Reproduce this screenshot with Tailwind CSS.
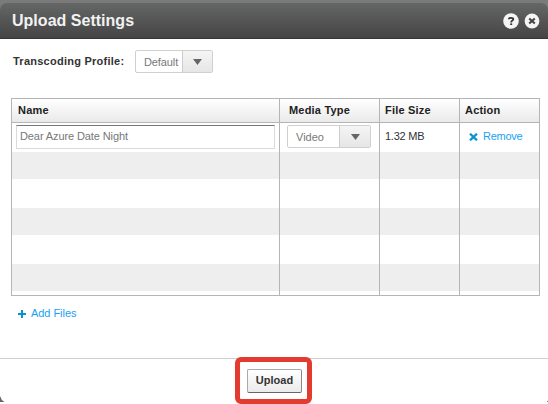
<!DOCTYPE html>
<html lang="en">
<head>
<meta charset="utf-8">
<title>Upload Settings</title>
<script src="https://cdn.jsdelivr.net/npm/@tailwindcss/browser@4"></script>
</head>
<body class="w-[548px] h-[404px] overflow-hidden bg-white font-['Liberation_Sans',Arial,sans-serif] text-[11px] leading-[14px] text-[#333]">
<div class="relative flex flex-col h-[404px]">
  <header class="h-[39px] bg-[#7a7a7a] pt-[3px] shrink-0">
    <div class="flex items-center h-9 pl-3 pr-2 rounded-t-[7px] border-b border-[#3a3434] bg-linear-to-b from-[#656666] to-[#444544]">
      <h1 class="text-[16px] leading-5 font-bold text-[#f2f2f2] tracking-[0.02px] whitespace-nowrap">Upload Settings</h1>
      <div class="ml-auto flex items-center gap-[5px]">
        <button aria-label="Help"><svg class="block" width="16" height="16" viewBox="0 0 16 16"><circle cx="8" cy="8" r="7.8" fill="#f5f5f5"/><path d="M5.7 6.2Q5.8 4.8 8 4.8Q10.3 4.8 10.3 6.3Q10.3 7.2 9.1 7.8Q8.2 8.3 8.2 9.4" fill="none" stroke="#333" stroke-width="1.8"/><path d="M7.2 10.4h2v1.6h-2z" fill="#333"/></svg></button>
        <button aria-label="Close"><svg class="block" width="16" height="16" viewBox="0 0 16 16"><circle cx="8" cy="8" r="7.4" fill="#f5f5f5"/><path d="M5.2 5.4l5.6 5.2M10.8 5.4l-5.6 5.2" stroke="#444" stroke-width="2"/></svg></button>
      </div>
    </div>
  </header>
  <main class="h-[319px] shrink-0">
    <div class="flex items-start pt-[11px] pl-[13px] h-[59px]">
      <label class="w-[122px] pt-1 font-bold tracking-[0.25px] whitespace-nowrap">Transcoding Profile:</label>
      <div class="flex w-[78px] h-[23px] border border-[#d0d0d0] rounded-[2px] text-[#777]">
        <span class="w-[47px] pl-2 pt-[4px] border-r border-[#ccc] tracking-[-0.1px]">Default</span>
        <span class="flex-1 flex items-center justify-center bg-linear-to-b from-[#f5f5f5] to-[#e6e6e6]"><svg width="9" height="6" viewBox="0 0 9 6"><path d="M0 0h9L4.5 6z" fill="#666"/></svg></span>
      </div>
    </div>
    <div class="ml-[11px] w-[529px] h-[198px] border border-[#b5b5b8] grid grid-cols-[268px_100px_80px_79px] grid-rows-[24px_29px_27px_29px_27px_29px_27px_4px]">
      <div class="col-span-4 grid grid-cols-subgrid border-b border-[#b5b5b8] bg-linear-to-b from-white to-[#eaeaea] font-bold text-[#222] tracking-[0.2px]">
        <div class="pl-[6px] pt-1 border-r border-[#b5b5b8]">Name</div>
        <div class="pl-[9px] pt-1 border-r border-[#b5b5b8]">Media Type</div>
        <div class="pl-[5px] pt-1 border-r border-[#b5b5b8]">File Size</div>
        <div class="pl-[5px] pt-1">Action</div>
      </div>
      <div class="col-span-4 grid grid-cols-subgrid">
        <div class="pl-1 pt-[2px] border-r border-[#b5b5b8]"><div class="w-[259px] h-6 border border-[#dadada] border-t-[#777] pl-[3px] pt-[3px] text-[#777] tracking-[-0.1px]">Dear Azure Date Night</div></div>
        <div class="pl-[7px] pt-[2px] border-r border-[#b5b5b8]">
          <div class="flex w-[84px] h-[23px] border border-[#d0d0d0] rounded-[2px] text-[#777]">
            <span class="w-[52px] pl-2 pt-1 border-r border-[#ccc]">Video</span>
            <span class="flex-1 flex items-center justify-center bg-linear-to-b from-[#f5f5f5] to-[#e6e6e6]"><svg width="9" height="6" viewBox="0 0 9 6"><path d="M0 0h9L4.5 6z" fill="#666"/></svg></span>
          </div>
        </div>
        <div class="pl-[5px] pt-[6px] border-r border-[#b5b5b8] tracking-[-0.25px]">1.32 MB</div>
        <a class="flex items-start pl-[9px] pt-[6px] text-[#1a9ff5] tracking-[-0.25px]"><svg class="mt-[4px] mr-[5px]" width="9" height="8" viewBox="0 0 9 8"><path d="M1 .7L8 7.3M8 .7L1 7.3" stroke="#0794cf" stroke-width="2.3"/></svg>Remove</a>
      </div>
      <div class="col-span-4 grid grid-cols-subgrid bg-[#eee]"><i class="border-r border-[#b5b5b8]"></i><i class="border-r border-[#b5b5b8]"></i><i class="border-r border-[#b5b5b8]"></i></div>
      <div class="col-span-4 grid grid-cols-subgrid"><i class="border-r border-[#b5b5b8]"></i><i class="border-r border-[#b5b5b8]"></i><i class="border-r border-[#b5b5b8]"></i></div>
      <div class="col-span-4 grid grid-cols-subgrid bg-[#eee]"><i class="border-r border-[#b5b5b8]"></i><i class="border-r border-[#b5b5b8]"></i><i class="border-r border-[#b5b5b8]"></i></div>
      <div class="col-span-4 grid grid-cols-subgrid"><i class="border-r border-[#b5b5b8]"></i><i class="border-r border-[#b5b5b8]"></i><i class="border-r border-[#b5b5b8]"></i></div>
      <div class="col-span-4 grid grid-cols-subgrid bg-[#eee]"><i class="border-r border-[#b5b5b8]"></i><i class="border-r border-[#b5b5b8]"></i><i class="border-r border-[#b5b5b8]"></i></div>
      <div class="col-span-4 grid grid-cols-subgrid"><i class="border-r border-[#b5b5b8]"></i><i class="border-r border-[#b5b5b8]"></i><i class="border-r border-[#b5b5b8]"></i></div>
    </div>
    <a class="flex items-start pl-[18px] pt-[10px] text-[#1a9ff5] tracking-[-0.05px]"><svg class="mt-1 mr-[5px]" width="8" height="8" viewBox="0 0 8 8"><path d="M3 0h2v3h3v2H5v3H3V5H0V3h3z" fill="#0794cf"/></svg>Add Files</a>
  </main>
  <footer class="h-[46px] border-t border-[#ccd1d1] pt-[10px] pl-[247px]">
    <button class="block w-[55px] h-6 rounded-[2px] border border-[#aaa] border-b-[#666] border-r-[#888] bg-linear-to-b from-white to-[#ebebeb] font-bold pb-[2px]">Upload</button>
  </footer>
  <div class="absolute left-[235px] top-[357px] w-[77px] h-[47px] border-5 border-[#e43b30] rounded-[6px]"></div>
  <svg class="absolute left-0 top-[396px]" width="5" height="6" viewBox="0 0 5 6"><path d="M0 0Q1 4 4.5 6H0z" fill="#666"/></svg>
  <svg class="absolute right-0 top-[400px]" width="2" height="2" viewBox="0 0 2 2"><path d="M2 .5V2H.8z" fill="#666"/></svg>
</div>
</body>
</html>
